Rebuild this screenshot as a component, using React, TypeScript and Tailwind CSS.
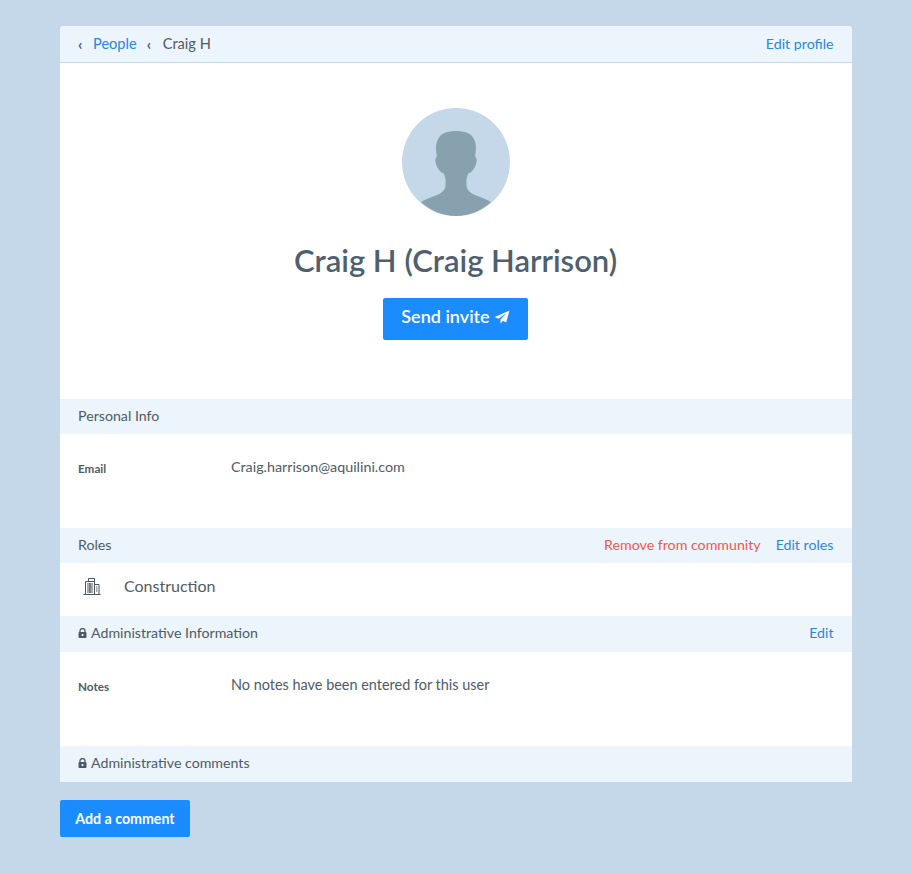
import React from "react";

const font = { fontFamily: 'Lato, sans-serif' };

function Lock() {
  return (
    <svg width="9" height="10" viewBox="0 0 9 10" className="mr-[4px] shrink-0">
      <path d="M2 4.5V3a2.5 2.5 0 0 1 5 0v1.5" fill="none" stroke="#4a5a6a" strokeWidth="1.3" />
      <rect x="0.5" y="4" width="8" height="6" rx="1" fill="#4a5a6a" />
      <rect x="3.7" y="6" width="1.6" height="2" fill="#ffffff" />
    </svg>
  );
}

function Bar({ children, right, h, pb }: { children: React.ReactNode; right?: React.ReactNode; h: string; pb: string }) {
  return (
    <div className={`flex items-center justify-between bg-[#ecf4fc] pl-[18px] pr-[18.5px] text-[14.2px] text-[#4f5b67] ${h} ${pb}`}>
      <div className="flex items-center">{children}</div>
      {right}
    </div>
  );
}

function Field({ label, value, size, pt }: { label: string; value: string; size: string; pt: string }) {
  return (
    <div className={`flex h-[94px] items-start pl-[18px] ${pt}`}>
      <div className="w-[153px] pt-[2px] text-[11.7px] font-bold leading-[16px] text-[#4f5b67]">{label}</div>
      <div className={`leading-[18px] text-[#4f5b67] ${size}`}>{value}</div>
    </div>
  );
}

export default function App() {
  return (
    <div className="min-h-[874px] bg-[#c5d8ea] px-[60px] pt-[26px]" style={font}>
      <div className="w-[792px] overflow-hidden rounded-t-[4px] bg-white">
        <div className="flex h-[37px] items-center justify-between border-b border-[#c5d8ea] bg-[#ecf4fc] pl-[18px] pr-[18.5px] text-[14.2px]">
          <div className="flex items-center text-[14.6px] text-[#4f5b67]">
            <span className="w-[15px] text-[15px] font-bold">‹</span>
            <a className="text-[#2b86e0]">People</a>
            <span className="ml-[10px] w-[16px] text-[15px] font-bold">‹</span>
            <span>Craig H</span>
          </div>
          <a className="text-[#2b86e0]">Edit profile</a>
        </div>

        <div className="flex h-[336px] flex-col items-center pt-[45px]">
          <svg width="108" height="108" viewBox="0 0 108 108" className="shrink-0">
            <circle cx="54" cy="54" r="54" fill="#c5d8ea" />
            <path
              d="M19 94 C29 88 41 87 43 80 C44 76 44 71 42 66 C38 64 35 60 34 56 C33 53 33 50 35 48 C33 39 34 32 39 27 C43 24 48 23 54 23 C60 23 65 24 69 27 C74 32 75 39 73 48 C75 50 75 53 74 56 C73 60 70 64 66 66 C64 71 64 76 65 80 C67 87 79 88 89 94 C79 103 67 108 54 108 C41 108 29 103 19 94 Z"
              fill="#87a2ae"
            />
          </svg>
          <h1 className="mr-[1px] mt-[25px] text-[31px] font-semibold leading-[38px] text-[#4f5f6f]">Craig H (Craig Harrison)</h1>
          <button className="mr-[1px] mt-[19px] flex h-[42px] w-[145px] items-center justify-center gap-[4px] rounded-[2px] bg-[#1a8cff] pb-[5px] text-[18px] font-semibold text-white">
            Send invite
            <svg width="16" height="14" viewBox="0 0 16 14">
              <path d="M15.5 0.5 L0.5 7 L4.5 8.7 L12.5 3 L6.5 9.6 L6.5 13.5 L9 10.8 L12.2 12.5 Z" fill="#ffffff" />
            </svg>
          </button>
        </div>

        <Bar h="h-[35px]" pb="pb-[1px]">Personal Info</Bar>
        <Field label="Email" value="Craig.harrison@aquilini.com" size="text-[14.3px]" pt="pt-[24px]" />
        <Bar
          h="h-[35px]"
          pb="pb-[1px]"
          right={
            <div className="flex gap-[15px]">
              <a className="text-[#f0584f]">Remove from community</a>
              <a className="text-[#2b86e0]">Edit roles</a>
            </div>
          }
        >
          Roles
        </Bar>
        <div className="flex h-[53px] items-center pb-[7px] pl-[23px] text-[16px] text-[#4f5b67]">
          <svg width="18" height="18" viewBox="0 0 18 18" fill="none" stroke="#4a5663" strokeWidth="1" className="mr-[23px]">
            <path d="M0.5 17.5H17.5M2.5 17.5V4.5H11.5V17.5M5.5 4.5V1.5H11.5V4.5M11.5 7.5H16V17.5" />
            <path d="M4 7H10M4 9H10M4 11H10M4 13H10M4 15H10M7 6V16M13 10H14.5M13 12H14.5M13 14H14.5" />
          </svg>
          Construction
        </div>
        <Bar h="h-[36px]" pb="pb-[2px]" right={<a className="text-[#2b86e0]">Edit</a>}>
          <Lock />
          Administrative Information
        </Bar>
        <Field label="Notes" value="No notes have been entered for this user" size="text-[14.45px]" pt="pt-[24px]" />
        <Bar h="h-[36px]" pb="pb-[2px]">
          <Lock />
          Administrative comments
        </Bar>
      </div>
      <button className="mt-[18px] h-[37px] w-[130px] rounded-[2px] bg-[#1a8cff] text-[14.2px] font-bold text-white">Add a comment</button>
    </div>
  );
}
